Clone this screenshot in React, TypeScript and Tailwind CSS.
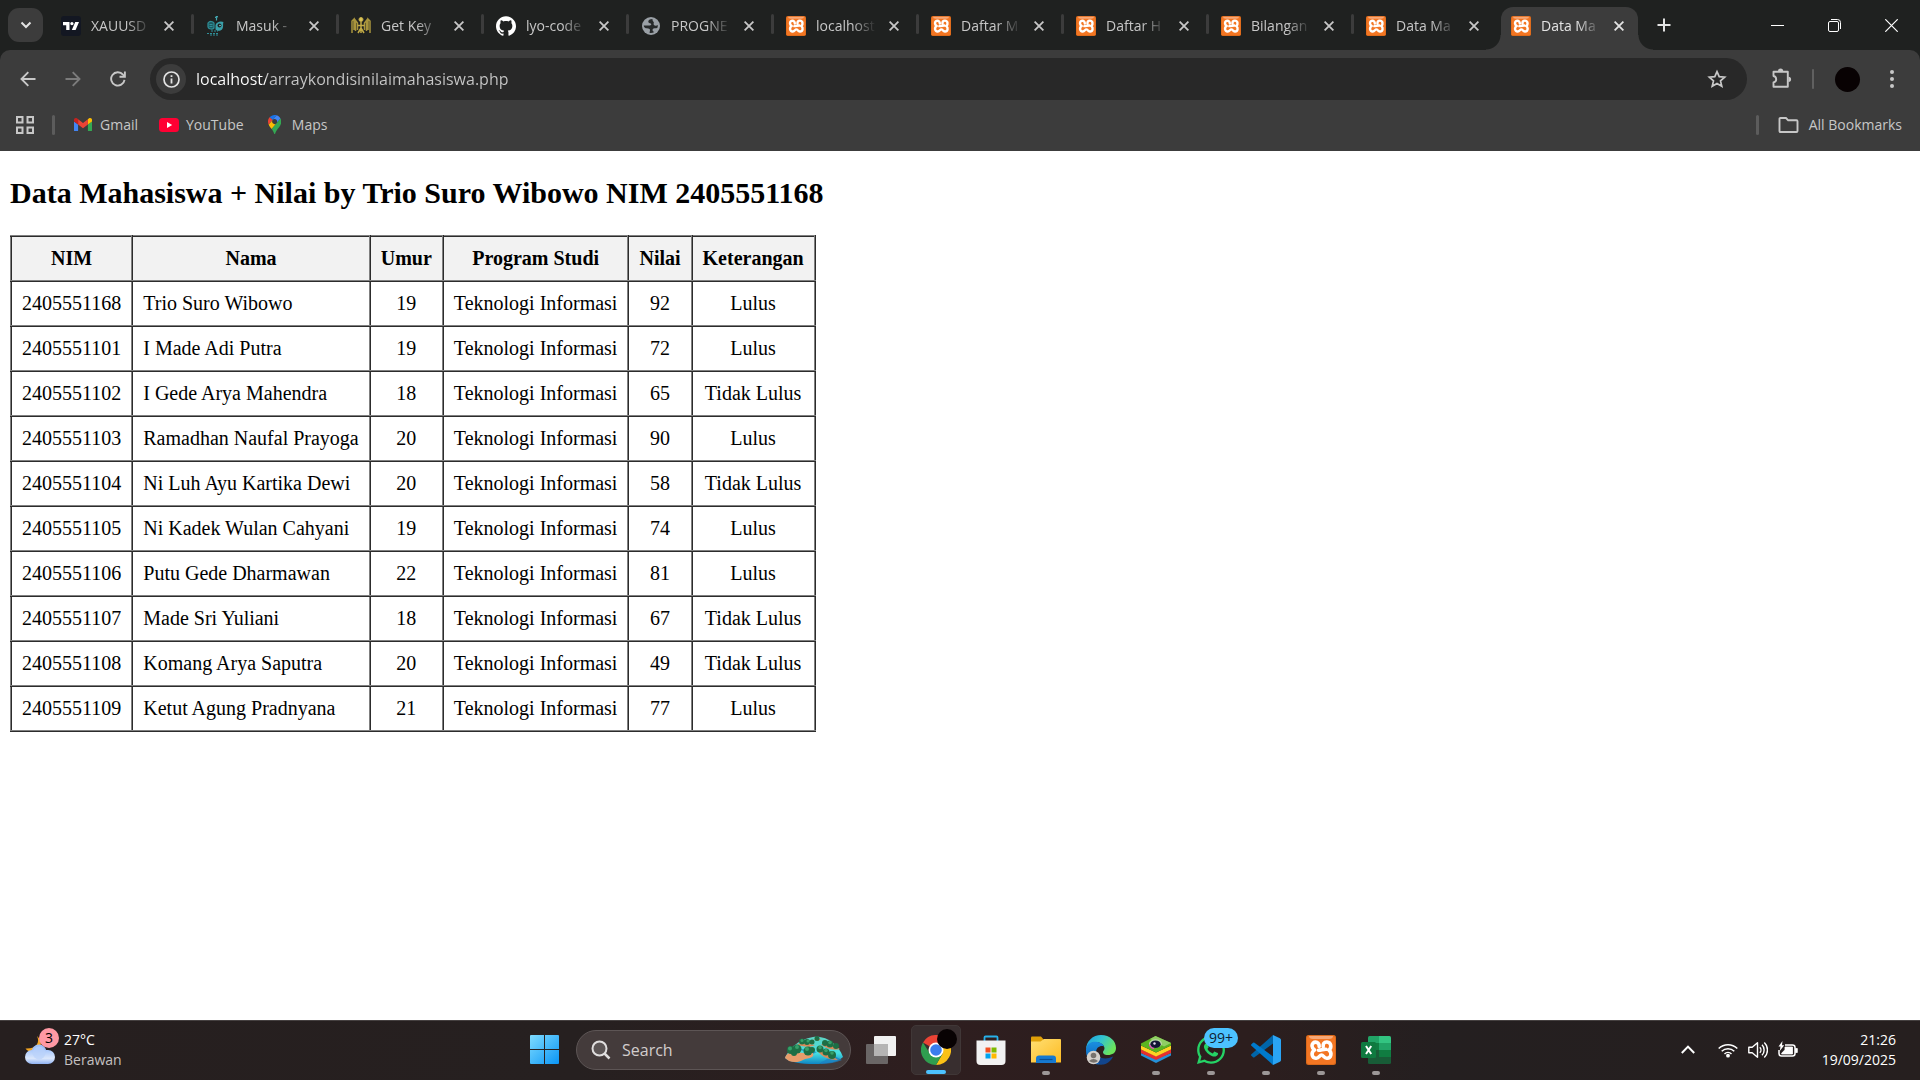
import React from "react";
import { SiGithub, SiTradingview } from "react-icons/si";
import { FaWhatsapp } from "react-icons/fa";

type IconProps = { className?: string };

const ui = 'font-["Open_Sans","Noto_Sans",sans-serif]';

function XamppIcon({ className = "size-5" }: IconProps) {
  return (
    <svg viewBox="0 0 30 30" className={`${className} shrink-0`}>
      <rect width="30" height="30" rx="2.500" fill="#d9691b" />
      <rect x="1" y="1" width="28" height="28" rx="2" fill="#f37623" />
      <path d="M3 1h24q0 3-4 3H7Q3 4 3 1z" fill="#f6a878" />
      <path
        d="M13.200 11.500C13.500 5.500 5.800 6 6 11c.1 2 1.200 3 2.600 4-4 2.200-3 8.500 1.600 8.200 3-.2 3.300-3.200 5.300-3.200s2.300 3 5.300 3.200c4.600.3 5.400-5.700 2.200-8 3-2.700 2.200-7.900-2-8.200-3.200-.2-4 2-3.800 4.500M12.500 15.200c3.500 0 3.500-1 7.500-1"
        fill="none"
        stroke="#fff"
        strokeWidth="3.600"
        strokeLinecap="round"
        strokeLinejoin="round"
      />
    </svg>
  );
}

function TradingViewIcon() {
  return (
    <span className="flex size-5 shrink-0 items-center justify-center rounded-[3px] bg-[#131722]">
      <SiTradingview className="size-4 text-white" />
    </span>
  );
}

function OwlIcon() {
  return (
    <svg viewBox="0 0 20 20" className="size-5 shrink-0">
      <g fill="none" stroke="#2f8f98" strokeWidth="1.200">
        <path d="M10.500 0v4.500M9 1.500l3-.8" stroke="#43a9b3" />
        <path d="M2 7c2-2.500 5-1.500 6 0v5c-1.500 1.500-5 1.500-6-1z" fill="#1d5a61" />
        <path d="M3.500 8.500h3M3.500 10.500h3" />
        <path d="M1 17.500h11M4 19h9M5 15h7" strokeDasharray="2 1" />
      </g>
      <path d="M9.500 9c1-3 5-4.500 8-3-1 2 .5 5-1.500 7.500-2 1.800-5 1.500-6.500 0z" fill="#3aa0aa" />
      <circle cx="13.500" cy="9.500" r="2" fill="#1f2120" />
      <circle cx="14" cy="9.500" r=".8" fill="#8ad5dc" />
    </svg>
  );
}

function EagleIcon() {
  return (
    <svg viewBox="0 0 20 20" className="size-5 shrink-0" fill="none" stroke="#a8943c" strokeWidth="1.500">
      <path d="M1 17V5l2-2v11M4.500 15V4.500L6.500 7v7M19 17V5l-2-2v11M15.500 15V4.500L13.500 7v7" />
      <path d="M10 6v7M10 12l-3 5M10 12l3 5M10 13v4M6.500 9.500h7" stroke="#c2ab46" />
      <circle cx="10" cy="3.500" r="2" fill="#dcc65a" stroke="#c2ab46" strokeWidth="1" />
    </svg>
  );
}

function GlobeIcon() {
  return (
    <svg viewBox="0 0 20 20" className="size-5 shrink-0">
      <circle cx="10" cy="10" r="9" fill="#9aa0a6" />
      <path d="M11.500 3c-2.700 0-4.500 1.300-4.200 3 .3 1.500 2.800 1 3 2.300.1 1.300-2 1.300-3.600 1.200-1.600 0-3-.3-4 .1.200 1.500.9 2.400 2.100 2.700 1.600.3 3.300 0 4 1 .6 1.200-.3 2.300-.2 3.600 1.700.4 3.400 0 4.700-.9-1.600-.8-2-1.800-1.600-2.800.6-1.300 3-1 4.600-1.300.4-.9.600-1.900.5-2.900-1.200.9-3.300.9-4-.2-.6-1.100.4-1.700-.1-2.700-.5-1-1.500-1.300-1.200-3.100Z" fill="#272a2b" />
    </svg>
  );
}

const tabs: { title: string; icon: React.ReactNode }[] = [
  { title: "XAUUSD", icon: <TradingViewIcon /> },
  { title: "Masuk -", icon: <OwlIcon /> },
  { title: "Get Key", icon: <EagleIcon /> },
  { title: "lyo-code", icon: <SiGithub className="size-5 shrink-0 text-white" /> },
  { title: "PROGNE", icon: <GlobeIcon /> },
  { title: "localhost", icon: <XamppIcon /> },
  { title: "Daftar M", icon: <XamppIcon /> },
  { title: "Daftar H", icon: <XamppIcon /> },
  { title: "Bilangan", icon: <XamppIcon /> },
  { title: "Data Ma", icon: <XamppIcon /> },
  { title: "Data Ma", icon: <XamppIcon /> },
];

function CloseGlyph({ className = "size-[10px]" }: IconProps) {
  return (
    <svg viewBox="0 0 10 10" className={className} fill="none" stroke="currentColor" strokeWidth="1.800">
      <path d="M.6.6l8.800 8.800M9.400.6L.6 9.400" />
    </svg>
  );
}

function TabStrip() {
  return (
    <header className="flex h-[50px] items-stretch bg-[#1f2120] pl-2 text-[#c7c7c7]">
      <button aria-label="Search tabs" className="mt-2 mr-2 flex h-[34px] w-[35px] shrink-0 items-center justify-center rounded-[11px] bg-[#3c3c3c] text-[#e3e3e3]">
        <svg viewBox="0 0 12 12" className="size-3" fill="none" stroke="currentColor" strokeWidth="2">
          <path d="M1.500 3.500L6 8l4.500-4.500" />
        </svg>
      </button>
      <ul className="flex min-w-0 items-stretch">
        {tabs.map((tab, i) => {
          const active = i === tabs.length - 1;
          return (
            <li key={i} className="flex w-[145px] min-w-0 items-stretch gap-[3px] pt-[7px]">
              <div
                className={
                  active
                    ? "relative flex w-[137px] items-center rounded-t-[12px] bg-[#3c3c3c] pb-[6px] pl-[10px] text-[#e3e3e3]"
                    : "flex w-[137px] items-center pb-[6px] pl-[10px]"
                }
              >
                {active && (
                  <>
                    <span className="absolute bottom-0 -left-[15px] size-[15px] bg-[radial-gradient(circle_at_top_left,transparent_14px,#3c3c3c_15px)]" />
                    <span className="absolute -right-[15px] bottom-0 size-[15px] bg-[radial-gradient(circle_at_top_right,transparent_14px,#3c3c3c_15px)]" />
                  </>
                )}
                {tab.icon}
                <a href="#tab" className="ml-[10px] w-[60px] text-sm whitespace-nowrap [mask-image:linear-gradient(to_right,black_60%,transparent)]">
                  {tab.title}
                </a>
                <button aria-label={`Close ${tab.title}`} className="ml-2 flex size-5 shrink-0 items-center justify-center">
                  <CloseGlyph />
                </button>
              </div>
              {i < tabs.length - 2 && <span className="mt-[7px] h-5 w-[3px] rounded-full bg-[#3c3c3c]" />}
            </li>
          );
        })}
      </ul>
      <button aria-label="New tab" className="ml-[3px] flex w-[30px] items-center justify-center">
        <svg viewBox="0 0 14 14" className="size-[14px]" fill="none" stroke="#e3e3e3" strokeWidth="2">
          <path d="M7 .5v13M.5 7h13" />
        </svg>
      </button>
      <div className="ml-auto flex text-white">
        <button aria-label="Minimize" className="flex w-[57px] items-center justify-center">
          <span className="h-px w-[13px] bg-white" />
        </button>
        <button aria-label="Restore" className="flex w-[57px] items-center justify-center">
          <svg viewBox="0 0 13 13" className="size-[13px]" fill="none" stroke="currentColor">
            <rect x=".5" y="2.500" width="10" height="10" rx="1.500" />
            <path d="M3 .5h6.500a3 3 0 0 1 3 3V10" />
          </svg>
        </button>
        <button aria-label="Close" className="flex w-[57px] items-center justify-center">
          <svg viewBox="0 0 13 13" className="size-[13px]" fill="none" stroke="currentColor" strokeWidth="1.200">
            <path d="M.3.3l12.400 12.400M12.700.3L.3 12.700" />
          </svg>
        </button>
      </div>
    </header>
  );
}

function Toolbar() {
  return (
    <div className="flex items-center bg-[#3c3c3c] pt-2 pl-[5px]">
      <button aria-label="Back" className="flex w-[45px] justify-center text-[#c7c7c7]">
        <svg viewBox="0 0 16 16" className="size-4" fill="none" stroke="currentColor" strokeWidth="1.900">
          <path d="M15.500 8H1.800M8.300 1.200L1.500 8l6.800 6.800" />
        </svg>
      </button>
      <button aria-label="Forward" className="flex w-[45px] justify-center text-[#7b7b7b]">
        <svg viewBox="0 0 16 16" className="size-4" fill="none" stroke="currentColor" strokeWidth="1.900">
          <path d="M.5 8h13.700M7.700 1.200L14.500 8l-6.800 6.800" />
        </svg>
      </button>
      <button aria-label="Reload" className="flex w-[45px] justify-center text-[#c7c7c7]">
        <svg viewBox="0 0 16 16" className="size-4" fill="none" stroke="currentColor" strokeWidth="1.900">
          <path d="M14.500 8.800A6.700 6.700 0 1 1 13 3.600l1.500 1.500" />
          <path d="M14.900.4v5.300H9.500" />
        </svg>
      </button>
      <div className="ml-[10px] flex h-[42px] min-w-0 flex-1 items-center rounded-full bg-[#282828] pr-5 pl-[6px]">
        <button aria-label="Site information" className="flex size-[30px] shrink-0 items-center justify-center rounded-full bg-[#3c3c3c]">
          <svg viewBox="0 0 17 17" className="size-[17px]" fill="none" stroke="#e3e3e3" strokeWidth="1.700">
            <circle cx="8.500" cy="8.500" r="7.500" />
            <path d="M8.500 7.500v5M8.500 4.300v1.800" strokeWidth="1.800" />
          </svg>
        </button>
        <input
          aria-label="Address"
          defaultValue="localhost/arraykondisinilaimahasiswa.php"
          className="ml-[10px] min-w-0 flex-1 bg-[linear-gradient(to_right,#ffffff_70px,#c7c7c7_70px)] bg-clip-text text-base text-transparent outline-none"
        />
        <button aria-label="Bookmark this tab" className="text-[#c7c7c7]">
          <svg viewBox="0 0 20 20" className="size-5" fill="none" stroke="currentColor" strokeWidth="1.700">
            <path d="M10 2.600l2.200 5.100 5.500.5-4.200 3.700 1.300 5.400-4.800-2.900-4.800 2.900 1.300-5.400L2.300 8.200l5.500-.5z" />
          </svg>
        </button>
      </div>
      <button aria-label="Extensions" className="ml-6 text-[#c7c7c7]">
        <svg viewBox="0 0 22 22" className="size-[22px]">
          <path d="M2.500 3.800h14.300v15H2.500v-4.300c3.600-1 3.600-5.500 0-6.500z" fill="none" stroke="currentColor" strokeWidth="1.900" strokeLinejoin="round" />
          <path d="M7 3a2.600 2.600 0 0 1 5.200 0zM17.500 8.700a2.600 2.600 0 0 1 0 5.200z" fill="currentColor" />
        </svg>
      </button>
      <span className="ml-[19px] h-5 w-[2px] rounded-full bg-[#606060]" />
      <button aria-label="Profile" className="ml-[21px] size-[25px] rounded-full bg-[#080203]" />
      <button aria-label="Menu" className="mr-[18px] ml-[22px] flex w-5 justify-center text-[#c7c7c7]">
        <svg viewBox="0 0 4 18" className="h-[18px] w-1" fill="currentColor">
          <circle cx="2" cy="2" r="2" />
          <circle cx="2" cy="9" r="2" />
          <circle cx="2" cy="16" r="2" />
        </svg>
      </button>
    </div>
  );
}

function BookmarksBar() {
  return (
    <nav className="flex h-[51px] items-center bg-[#3c3c3c] pr-[18px] pb-[2px] pl-4 text-sm text-[#c7c7c7]">
      <button aria-label="Apps">
        <svg viewBox="0 0 18 18" className="size-[18px]" fill="none" stroke="currentColor" strokeWidth="2">
          <path d="M1 1h5.500v5.500H1zM11.500 1H17v5.500h-5.500zM1 11.500h5.500V17H1zM11.500 11.500H17V17h-5.500z" />
        </svg>
      </button>
      <span className="ml-[18px] h-5 w-[3px] rounded-full bg-[#5c5c5c]" />
      <a href="#gmail" className="ml-[19px] flex items-center gap-2">
        <svg viewBox="52 42 88 66" className="w-[18px]">
          <path fill="#4285f4" d="M58 108h14V74L52 59v43c0 3.320 2.690 6 6 6" />
          <path fill="#34a853" d="M120 108h14c3.320 0 6-2.690 6-6V59l-20 15" />
          <path fill="#fbbc04" d="M120 48v26l20-15v-8c0-7.420-8.470-11.650-14.400-7.200" />
          <path fill="#ea4335" d="M72 74V48l24 18 24-18v26L96 92" />
          <path fill="#c5221f" d="M52 51v8l20 15V48l-5.600-4.200c-5.940-4.450-14.400-.22-14.400 7.200" />
        </svg>
        Gmail
      </a>
      <a href="#youtube" className="ml-[21px] flex items-center gap-[7px]">
        <svg viewBox="0 0 20 14" className="w-5">
          <rect width="20" height="14" rx="3.500" fill="#ff0033" />
          <path d="M8 4l5.200 3L8 10z" fill="#fff" />
        </svg>
        YouTube
      </a>
      <a href="#maps" className="ml-6 flex items-center gap-[11px]">
        <svg viewBox="0 0 92.300 132.300" className="h-[19px]">
          <path fill="#1a73e8" d="M60.200 2.200C55.800.8 51 0 46.100 0 32 0 19.300 6.400 10.800 16.500l21.800 18.300L60.200 2.200z" />
          <path fill="#ea4335" d="M10.800 16.500C4.100 24.500 0 34.900 0 46.100c0 8.700 1.700 15.700 4.600 22l28-33.300-21.800-18.300z" />
          <path fill="#4285f4" d="M46.200 28.500c9.800 0 17.700 7.900 17.700 17.700 0 4.300-1.600 8.300-4.200 11.400 0 0 13.900-16.600 27.500-32.700-5.600-10.800-15.300-19-27-22.700L32.600 34.800c3.300-3.800 8.100-6.300 13.600-6.300" />
          <path fill="#fbbc04" d="M46.200 63.800c-9.800 0-17.700-7.900-17.700-17.700 0-4.300 1.500-8.300 4.100-11.300l-28 33.300c4.800 10.600 12.800 19.200 21 29.900l34.100-40.500c-3.300 3.900-8.100 6.300-13.500 6.300" />
          <path fill="#34a853" d="M59.100 109.200c15.400-24.100 33.300-35 33.300-63 0-7.700-1.900-14.900-5.200-21.300L25.600 98c2.600 3.400 5.300 7.300 7.900 11.300 9.400 14.500 6.800 23.100 12.800 23.100s3.400-8.700 12.800-23.200" />
        </svg>
        Maps
      </a>
      <span className="ml-auto h-5 w-[3px] rounded-full bg-[#5c5c5c]" />
      <a href="#all" className="ml-[19px] flex items-center gap-[10px]">
        <svg viewBox="0 0 21 16" className="w-[21px]" fill="none" stroke="currentColor" strokeWidth="1.900" strokeLinejoin="round">
          <path d="M1.500 14V2q0-1 1-1H8l2.200 2.300h8.300q1 0 1 1V14q0 1-1 1h-16q-1 0-1-1z" />
        </svg>
        All Bookmarks
      </a>
    </nav>
  );
}

const headers = ["NIM", "Nama", "Umur", "Program Studi", "Nilai", "Keterangan"];

const students: [string, string, number, number][] = [
  ["2405551168", "Trio Suro Wibowo", 19, 92],
  ["2405551101", "I Made Adi Putra", 19, 72],
  ["2405551102", "I Gede Arya Mahendra", 18, 65],
  ["2405551103", "Ramadhan Naufal Prayoga", 20, 90],
  ["2405551104", "Ni Luh Ayu Kartika Dewi", 20, 58],
  ["2405551105", "Ni Kadek Wulan Cahyani", 19, 74],
  ["2405551106", "Putu Gede Dharmawan", 22, 81],
  ["2405551107", "Made Sri Yuliani", 18, 67],
  ["2405551108", "Komang Arya Saputra", 20, 49],
  ["2405551109", "Ketut Agung Pradnyana", 21, 77],
];

const cell = "border-2 border-[#808080] [border-style:ridge] p-[10px]";

function Page() {
  return (
    <main className='flex-1 bg-white px-[10px] py-[25px] font-["Liberation_Serif",serif] text-xl leading-[23px] text-black'>
      <h2 className="mb-[25px] text-[30px] leading-[34px] font-bold">Data Mahasiswa + Nilai by Trio Suro Wibowo NIM 2405551168</h2>
      <table className="border-collapse text-center">
        <thead>
          <tr className="bg-[#f2f2f2]">
            {headers.map((h) => (
              <th key={h} className={cell}>{h}</th>
            ))}
          </tr>
        </thead>
        <tbody>
          {students.map(([nim, name, age, score]) => (
            <tr key={nim}>
              <td className={cell}>{nim}</td>
              <td className={`${cell} text-left`}>{name}</td>
              <td className={cell}>{age}</td>
              <td className={cell}>Teknologi Informasi</td>
              <td className={cell}>{score}</td>
              <td className={cell}>{score >= 70 ? "Lulus" : "Tidak Lulus"}</td>
            </tr>
          ))}
        </tbody>
      </table>
    </main>
  );
}

function WeatherIcon() {
  return (
    <svg viewBox="0 0 30 30" className="size-[30px]">
      <defs>
        <linearGradient id="cloud" x1="0" y1="0" x2="0" y2="1">
          <stop offset="0" stopColor="#a9c8fb" />
          <stop offset=".6" stopColor="#dbe7fb" />
          <stop offset="1" stopColor="#8fb2f2" />
        </linearGradient>
      </defs>
      <path d="M12 1c3 6 0 13-11.500 12.500C3 17 9 18 13 15s4-10-1-14z" fill="#f5a623" />
      <circle cx="14" cy="17" r="7.500" fill="#9fc0f7" />
      <rect x="0" y="15" width="30" height="14" rx="7" fill="url(#cloud)" />
      <circle cx="14" cy="18" r="6.500" fill="#b9d2fa" opacity=".7" />
    </svg>
  );
}

function WindowsIcon() {
  return (
    <svg viewBox="0 0 29 29" className="size-[29px]">
      <defs>
        <linearGradient id="win" x1="0" y1="0" x2="1" y2="1">
          <stop offset="0" stopColor="#7fdcff" />
          <stop offset="1" stopColor="#0a95f5" />
        </linearGradient>
      </defs>
      <path d="M1 0h13v14H0V1q0-1 1-1zM15 0h13q1 0 1 1v13H15zM0 15h14v14H1q-1 0-1-1zM15 15h14v13q0 1-1 1H15z" fill="url(#win)" />
    </svg>
  );
}

function IslandsArt() {
  return (
    <svg viewBox="0 0 58 28" className="h-7 w-[58px]">
      <defs>
        <linearGradient id="sea" x1="0" y1="0" x2="0" y2="1">
          <stop offset="0" stopColor="#5ed3c2" />
          <stop offset=".6" stopColor="#46e0e2" />
          <stop offset="1" stopColor="#0f86c4" />
        </linearGradient>
      </defs>
      <path d="M28 1c8-1 15 2 19 5 5 4 9 9 11 15-5 5-16 7-29 7S4 26 0 22C3 14 13 3 28 1z" fill="url(#sea)" />
      <path d="M36 26c6-2 10-5 8-9l13 7q-9 4-21 4zM12 12l20 4-6 3z" fill="#1d7fc0" opacity=".7" />
      <path d="M0 22c1-4 6-7 10-6 5 0 8 2 13 0 5-1 7 3 4 5s-6 1-9 3-9 3-14 1z" fill="#e79d6c" />
      <path d="M12 8c5-2 14 0 18 1-4 3-14 2-18-1zM36 8c6 0 14 2 19 5-7 2-15-1-19-5zM32 14c7 1 14 5 21 10-8 0-17-3-21-10zM28 3h8l-3 2z" fill="#d98a59" />
      <g fill="#1d6e45">
        <circle cx="6" cy="14" r="4" /><circle cx="12" cy="13" r="4.500" /><circle cx="9" cy="17" r="3" /><circle cx="23" cy="15" r="4.500" /><circle cx="27" cy="14" r="3" />
        <circle cx="17" cy="5.500" r="3" /><circle cx="22" cy="6" r="3" /><circle cx="27" cy="6" r="2.500" /><circle cx="32" cy="2.500" r="2.500" />
        <circle cx="40" cy="7" r="3" /><circle cx="45" cy="8" r="3.500" /><circle cx="51" cy="10" r="3" />
        <circle cx="35" cy="13" r="3.500" /><circle cx="41" cy="16" r="3.500" /><circle cx="47" cy="19" r="4" />
      </g>
      <g fill="#35a06a">
        <circle cx="5" cy="12.500" r="2" /><circle cx="12" cy="11" r="2" /><circle cx="22" cy="13" r="2" /><circle cx="17" cy="4.500" r="1.500" /><circle cx="23" cy="5" r="1.500" /><circle cx="45" cy="6.500" r="1.800" /><circle cx="35" cy="11.500" r="1.800" /><circle cx="41" cy="14.500" r="1.800" /><circle cx="47" cy="17" r="1.800" />
      </g>
    </svg>
  );
}

function TaskViewIcon() {
  return (
    <svg viewBox="0 0 30 28" className="w-[30px]">
      <rect x="8" width="22" height="20" rx="1" fill="#f1f1f1" />
      <rect y="8" width="22" height="20" rx="1" fill="#6a6666" />
      <path d="M8 8h14v12H8z" fill="#b5b4b4" />
    </svg>
  );
}

function ChromeIcon() {
  return (
    <span className="relative">
      <svg viewBox="0 0 30 30" className="size-[30px]">
        <path d="M15 15L2 7.500A15 15 0 0 1 28 7.500L28 8.500H15z" fill="#ea4335" />
        <path d="M28 7.500A15 15 0 0 1 15 30l6.500-11.300L20 8.500h8.500z" fill="#fbc116" />
        <path d="M2 7.500A15 15 0 0 0 15 30l6.500-11.300H9z" fill="#2f9e4f" />
        <circle cx="15" cy="15" r="7.500" fill="#fff" />
        <circle cx="15" cy="15" r="5.800" fill="#3b7ded" />
      </svg>
      <span className="absolute -top-[6px] -right-[6px] size-5 rounded-full bg-[#080203]" />
    </span>
  );
}

function StoreIcon() {
  return (
    <svg viewBox="0 0 30 30" className="size-[30px]">
      <path d="M8.500 7V2.500q0-1 1-1h11q1 0 1 1V7" fill="none" stroke="#27b1ea" strokeWidth="1.800" />
      <path d="M.5 5.500h29V26q0 4-4 4h-21q-4 0-4-4z" fill="#f2f2f2" />
      <path d="M9.500 12.500h5v5h-5z" fill="#f25022" />
      <path d="M15.500 12.500h5v5h-5z" fill="#7fba00" />
      <path d="M9.500 18.500h5v5h-5z" fill="#00a4ef" />
      <path d="M15.500 18.500h5v5h-5z" fill="#ffb900" />
    </svg>
  );
}

function FolderIcon() {
  return (
    <svg viewBox="0 0 30 27" className="w-[30px]">
      <defs>
        <linearGradient id="folder" x1="0" y1="0" x2="1" y2="1">
          <stop offset="0" stopColor="#ffdf73" />
          <stop offset="1" stopColor="#fdbb22" />
        </linearGradient>
      </defs>
      <path d="M0 1.500Q0 .5 1 .5h9l3 3.500v6H0z" fill="#e0a008" />
      <path d="M0 5.500h9.500L13 3h16q1 0 1 1v22.500H0z" fill="url(#folder)" />
      <path d="M5 27v-4.500q0-3 3-3h14q3 0 3 3V27z" fill="#1679d0" />
      <path d="M8.500 23.500h13" stroke="#0b4f94" strokeWidth="1.200" />
    </svg>
  );
}

function EdgeIcon() {
  return (
    <svg viewBox="0 0 30 30" className="size-[30px]">
      <defs>
        <linearGradient id="edgeTop" x1="0" y1="0" x2="1" y2=".5">
          <stop offset="0" stopColor="#1b9de2" />
          <stop offset=".5" stopColor="#33c4d0" />
          <stop offset="1" stopColor="#6be45c" />
        </linearGradient>
        <linearGradient id="edgeLow" x1="0" y1="0" x2="0" y2="1">
          <stop offset="0" stopColor="#1a8fe0" />
          <stop offset="1" stopColor="#0c5fb5" />
        </linearGradient>
      </defs>
      <path d="M0 15C0 6 7 0 15 0c9 0 15 6 15 13 0 5-4 7-8 7-4 0-5-1.500-5-3 0-1 1.500-1.500 1.500-4C18 9.500 14 7 10 7 5 7 1 10 0 15z" fill="url(#edgeTop)" />
      <path d="M0 14c1-5 5-7.500 10-7.200 4 .2 7 2 8 4.700-3-1.500-8 .5-8 6 0 6 6 9 11 8-1 2-4 4-8 4C6 29.500 0 24 0 16z" fill="url(#edgeLow)" />
      <path d="M11 17c0 6 8 8.500 16 4.500-2 5-7 8.500-12 8-4-1-6-6-4-12.500z" fill="#12458c" />
      <circle cx="7.500" cy="22.500" r="6.800" fill="#d4d0cb" />
      <circle cx="7.500" cy="20.500" r="2.800" fill="#77726d" />
      <path d="M3 26q4.500-4 9 0-4 3.500-9 0z" fill="#77726d" />
    </svg>
  );
}

function BlueStacksIcon() {
  return (
    <svg viewBox="0 0 30 27" className="w-[30px]">
      <path d="M0 17l15 6 15-6v2.500L15 27 0 19.500z" fill="#2590d8" />
      <path d="M0 13.500l15 6.500 15-6.500V17l-15 7-15-7z" fill="#e5302f" />
      <path d="M0 9.500l15 7 15-7v4l-15 7-15-7z" fill="#fdd323" />
      <path d="M0 7.500L14.500 0 30 7v2.500l-15 7-15-7z" fill="#59b520" />
      <path d="M14.500 0L30 7l-7 3.500L9 3z" fill="#8fce63" />
      <ellipse cx="14.500" cy="7.500" rx="6.500" ry="4.300" fill="#b9d8a6" />
      <ellipse cx="14.500" cy="8.300" rx="5.200" ry="3.800" fill="#111433" />
      <circle cx="13.500" cy="7.500" r="1.200" fill="#e6d9f2" />
      <path d="M8.500 8.500q1 3.500 4.500 4" fill="none" stroke="#e94bc0" strokeWidth="1.200" />
    </svg>
  );
}

function WhatsAppIcon() {
  return (
    <span className="relative">
      <FaWhatsapp className="size-8 text-[#25d366]" />
      <span className="absolute -top-[6px] left-[9px] rounded-full bg-[#4cc2ff] px-[5px] text-sm leading-5 text-[#102030]">99+</span>
    </span>
  );
}

function VsCodeIcon() {
  return (
    <svg viewBox="0 0 30 30" className="size-[30px]">
      <path d="M22 0v8.500L3.500 22.300q-.8.500-1.500 0L.4 20.800q-.8-.8 0-1.600z" fill="#0065a9" />
      <path d="M22 30v-8.500L3.500 7.700q-.8-.5-1.500 0L.4 9.200q-.8.8 0 1.600z" fill="#007acc" />
      <path d="M22 0l6.900 3.200Q30 3.800 30 5v20q0 1.200-1.100 1.800L22 30z" fill="#2aa4f4" />
    </svg>
  );
}

function ExcelIcon() {
  return (
    <svg viewBox="0 0 30 28" className="w-[30px]">
      <path d="M7 1.500Q7 0 8.500 0H18v7H7z" fill="#21a366" />
      <path d="M18 0h10.500Q30 0 30 1.500V7H18z" fill="#33c481" />
      <path d="M7 7h11v7H7z" fill="#107c41" />
      <path d="M18 7h12v7H18z" fill="#21a366" />
      <path d="M7 14h23v12.500q0 1.500-1.500 1.500h-20Q7 28 7 26.500z" fill="#185c37" />
      <path d="M18 14h12v7H18z" fill="#107c41" />
      <rect y="6" width="15" height="16" rx="1.500" fill="#0f7a40" />
      <path d="M5 10l5.200 8M10.200 10L5 18" stroke="#fff" strokeWidth="2" />
    </svg>
  );
}

const apps: { name: string; icon: React.ReactNode; state: "none" | "open" | "active" }[] = [
  { name: "Task view", icon: <TaskViewIcon />, state: "none" },
  { name: "Chrome", icon: <ChromeIcon />, state: "active" },
  { name: "Store", icon: <StoreIcon />, state: "none" },
  { name: "File Explorer", icon: <FolderIcon />, state: "open" },
  { name: "Edge", icon: <EdgeIcon />, state: "none" },
  { name: "BlueStacks", icon: <BlueStacksIcon />, state: "open" },
  { name: "WhatsApp", icon: <WhatsAppIcon />, state: "open" },
  { name: "VS Code", icon: <VsCodeIcon />, state: "open" },
  { name: "XAMPP", icon: <XamppIcon className="size-[30px]" />, state: "open" },
  { name: "Excel", icon: <ExcelIcon />, state: "open" },
];

function Taskbar() {
  return (
    <footer className="grid h-[60px] grid-cols-[1fr_auto_1fr] items-center border-t border-[#454040] bg-[linear-gradient(to_right,#261f1f,#262020_30%,#2e1e1f_48%,#2c1e1e_65%,#241f20_75%,#261f1f)] pb-[2px] text-white">
      <button className="flex items-center gap-[9px] justify-self-start pl-[25px] text-left text-sm leading-5">
        <span className="relative">
          <WeatherIcon />
          <span className="absolute -top-[7px] left-[14px] flex size-5 items-center justify-center rounded-full bg-[#ff99a4] text-sm text-black">3</span>
        </span>
        <span className="block">
          27°C
          <span className="block text-[#c4c0c0]">Berawan</span>
        </span>
      </button>
      <div className="flex items-center gap-[5px]">
        <button aria-label="Start" className="flex size-[50px] items-center justify-center">
          <WindowsIcon />
        </button>
        <label className="ml-[2px] flex h-10 w-[275px] items-center rounded-full border border-[#5d5555] bg-[#443b3b] pr-[7px] pl-[14px]">
          <svg viewBox="0 0 20 20" className="size-5 shrink-0" fill="none" stroke="#e0dede" strokeWidth="2">
            <circle cx="8.500" cy="8.500" r="7" fill="#5c5555" />
            <path d="M13.500 13.500l5 5" strokeWidth="2.500" />
          </svg>
          <input aria-label="Search" placeholder="Search" className="ml-[11px] min-w-0 flex-1 bg-transparent text-base outline-none placeholder:text-[#d2cdcd]" />
          <IslandsArt />
        </label>
        {apps.map((app) => (
          <button
            key={app.name}
            aria-label={app.name}
            className={
              app.state === "active"
                ? "relative flex size-[50px] items-center justify-center rounded-[5px] border border-[#403737] bg-[#382e2f]"
                : "relative flex size-[50px] items-center justify-center"
            }
          >
            {app.icon}
            {app.state === "active" && <span className="absolute bottom-0 h-1 w-5 rounded-full bg-[#4cc2ff]" />}
            {app.state === "open" && <span className="absolute bottom-0 h-1 w-2 rounded-full bg-[#9c9797]" />}
          </button>
        ))}
      </div>
      <div className="flex items-center justify-self-end pr-6">
        <button aria-label="Show hidden icons">
          <svg viewBox="0 0 14 9" className="w-[14px]" fill="none" stroke="currentColor" strokeWidth="2">
            <path d="M.8 8L7 1.600 13.200 8" />
          </svg>
        </button>
        <button aria-label="Network, volume and battery" className="ml-[23px] flex items-center gap-[10px]">
          <svg viewBox="0 0 20 16" className="w-5" fill="none" stroke="currentColor" strokeWidth="1.500">
            <path d="M.7 6.500a13.100 13.100 0 0 1 18.600 0M3.700 9.300a9 9 0 0 1 12.600 0M6.500 12a5 5 0 0 1 7 0" />
            <circle cx="10" cy="13.700" r="1.900" fill="currentColor" stroke="none" />
          </svg>
          <svg viewBox="0 0 20 18" className="w-5" fill="none" stroke="currentColor" strokeWidth="1.400" strokeLinejoin="round">
            <path d="M.8 6.200h3.400L9.500 1.800v14.400l-5.300-4.400H.8zM11.800 6.200a4 4 0 0 1 0 5.600M14 3.800a7.400 7.400 0 0 1 0 10.400M16.300 1.500a10.500 10.500 0 0 1 0 15" />
          </svg>
          <svg viewBox="0 0 20 17" className="w-5" fill="none" stroke="currentColor" strokeWidth="1.500">
            <path d="M7 4h7.500q2.500 0 2.500 2.500v6q0 2.500-2.500 2.500h-11Q1 15 1 12.500V9" />
            <path d="M7 6h7.500v7h-11q.5-2 3.500-4zM17.500 7.500h1.800v4h-1.800z" fill="currentColor" strokeWidth=".8" />
            <path d="M4.500 0L.5 5.500h2L1.800 10l4.400-5.800H4z" fill="currentColor" stroke="none" />
          </svg>
        </button>
        <button className="ml-6 text-right text-sm leading-5">
          21:26
          <span className="block">19/09/2025</span>
        </button>
      </div>
    </footer>
  );
}

export default function App() {
  return (
    <div className={`flex min-h-screen flex-col bg-[#1f2120] ${ui}`}>
      <TabStrip />
      <div className="overflow-hidden rounded-t-[10px]">
        <Toolbar />
        <BookmarksBar />
      </div>
      <Page />
      <Taskbar />
    </div>
  );
}
